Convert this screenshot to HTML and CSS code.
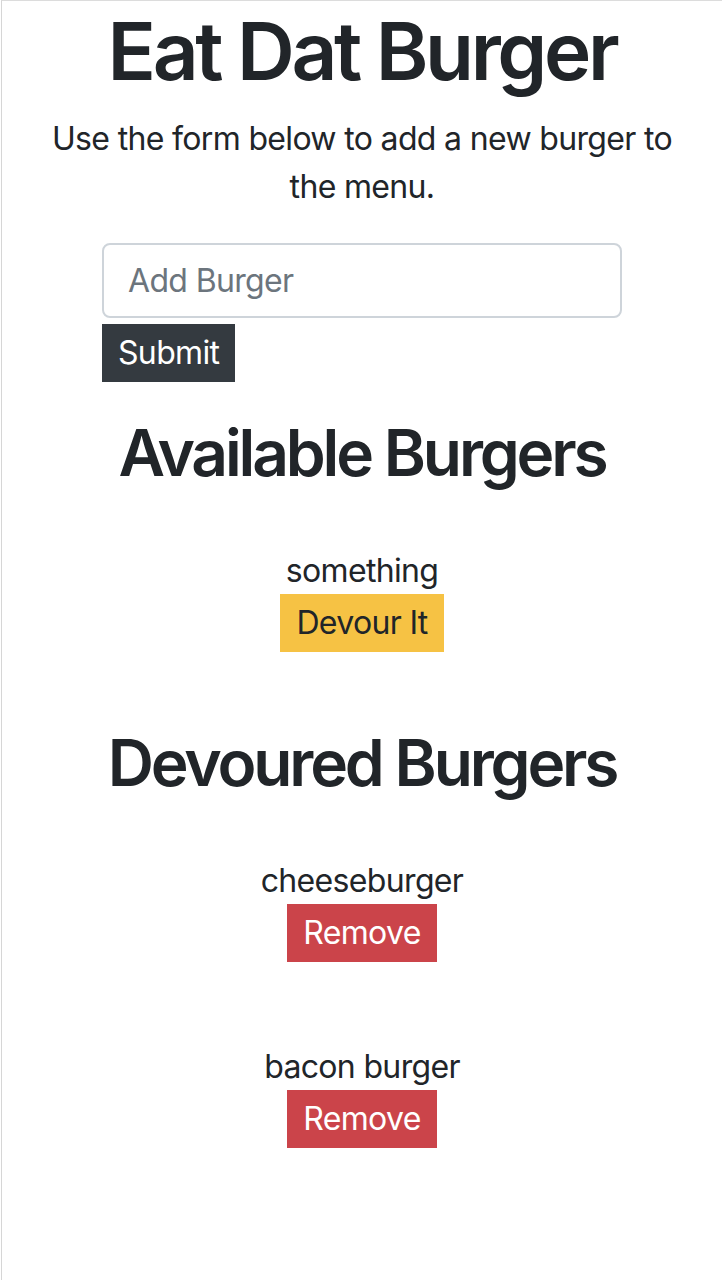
FILE: index.html
```html
<!DOCTYPE html>
<html lang="en">
<head>
<meta charset="utf-8">
<title>Eat Dat Burger</title>
<link rel="stylesheet" href="styles.css">
</head>
<body>
<div class="container">
  <h1 class="title">Eat Dat Burger</h1>
  <p class="lead">Use the form below to add a new burger to the menu.</p>
  <form class="add-form">
    <input class="field" type="text" placeholder="Add Burger">
    <div><button class="btn btn-dark" type="button">Submit</button></div>
  </form>

  <h2 class="section-title first">Available Burgers</h2>
  <div class="burger">
    <div class="burger-name">something</div>
    <button class="btn btn-warning" type="button">Devour It</button>
  </div>

  <h2 class="section-title second">Devoured Burgers</h2>
  <div class="burger devoured">
    <div class="burger-name">cheeseburger</div>
    <button class="btn btn-danger" type="button">Remove</button>
  </div>
  <div class="burger next">
    <div class="burger-name">bacon burger</div>
    <button class="btn btn-danger" type="button">Remove</button>
  </div>
</div>
</body>
</html>
```
FILE: styles.css
```css
html {
  background: #ffffff;
}
body {
  margin: 0;
  min-height: 1279px;
  border-top: 1px solid #dcdcdc;
  border-left: 1px solid #d6d6d6;
  margin-left: 1px;
  font-family: Inter, "Noto Sans", "Liberation Sans", sans-serif;
  color: #212529;
  font-size: 32px;
  line-height: 48px;
  letter-spacing: -0.66px;
}
.container {
  padding: 0 30px;
  text-align: center;
}
.title {
  margin: 2px 0 16px;
  font-size: 80px;
  line-height: 96px;
  font-weight: 600;
  letter-spacing: -3.35px;
}
.lead {
  margin: 0 0 32px;
}
.add-form {
  width: 520px;
  margin: 0 auto;
  text-align: left;
}
.field {
  display: block;
  box-sizing: border-box;
  width: 520px;
  height: 75px;
  padding: 0 24px;
  border: 2px solid #ced4da;
  border-radius: 8px;
  font-family: inherit;
  font-size: 32px;
  letter-spacing: -0.66px;
  color: #495057;
  background: #fff;
  outline: none;
}
.field::placeholder {
  color: #6c757d;
}
.add-form .btn {
  margin-top: 6px;
}
.btn {
  display: inline-block;
  border: 0;
  border-radius: 0;
  padding: 5px 16px;
  font-family: inherit;
  font-size: 32px;
  line-height: 48px;
  letter-spacing: -0.66px;
  cursor: pointer;
}
.btn-dark {
  background: #343a40;
  color: #fff;
}
.btn-warning {
  background: #f6c244;
  color: #212529;
}
.btn-danger {
  background: #cb444a;
  color: #fff;
}
.section-title {
  font-size: 64px;
  line-height: 77px;
  font-weight: 600;
  letter-spacing: -3.15px;
  margin: 0;
}
.section-title.first {
  margin-top: 32px;
}
.section-title.second {
  margin-top: 72px;
}
.burger {
  margin-top: 55px;
}
.burger.devoured {
  margin-top: 55px;
}
.burger.next {
  margin-top: 80px;
}
.burger-name {
  padding-top: 2px;
  line-height: 46px;
}
```
